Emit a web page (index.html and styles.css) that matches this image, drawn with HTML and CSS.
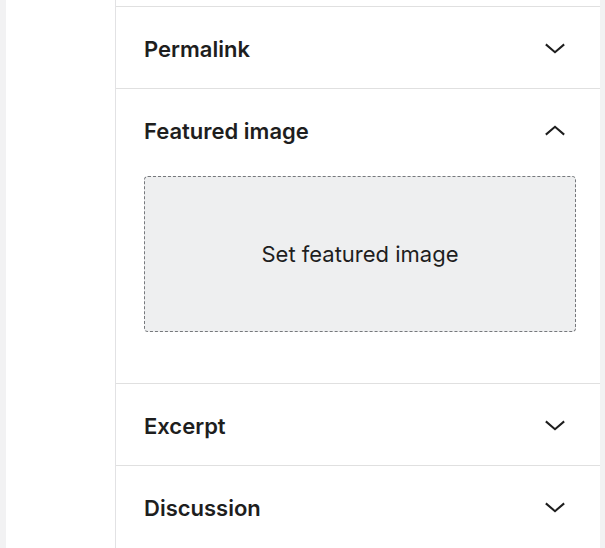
FILE: index.html
```html
<!DOCTYPE html>
<html>
<head>
<meta charset="utf-8">
<link rel="stylesheet" href="styles.css">
</head>
<body>
<div class="layout">
  <div class="edge-left"></div>
  <div class="canvas"></div>
  <div class="sidebar">
    <div class="prev-end"></div>
    <section class="panel">
      <div class="panel-header">
        <span class="panel-title">Permalink</span>
        <svg class="chev" viewBox="0 0 24 12" width="22" height="11"><path d="M2 1.5 L12 10 L22 1.5" fill="none" stroke="#1e1e1e" stroke-width="2.2"/></svg>
      </div>
    </section>
    <section class="panel open">
      <div class="panel-header">
        <span class="panel-title">Featured image</span>
        <svg class="chev" viewBox="0 0 24 12" width="22" height="11"><path d="M2 10.5 L12 2 L22 10.5" fill="none" stroke="#1e1e1e" stroke-width="2.2"/></svg>
      </div>
      <div class="panel-body">
        <div class="dropzone">Set featured image</div>
      </div>
    </section>
    <section class="panel">
      <div class="panel-header">
        <span class="panel-title">Excerpt</span>
        <svg class="chev" viewBox="0 0 24 12" width="22" height="11"><path d="M2 1.5 L12 10 L22 1.5" fill="none" stroke="#1e1e1e" stroke-width="2.2"/></svg>
      </div>
    </section>
    <section class="panel">
      <div class="panel-header">
        <span class="panel-title">Discussion</span>
        <svg class="chev" viewBox="0 0 24 12" width="22" height="11"><path d="M2 1.5 L12 10 L22 1.5" fill="none" stroke="#1e1e1e" stroke-width="2.2"/></svg>
      </div>
    </section>
  </div>
  <div class="edge-right"></div>
</div>
</body>
</html>
```

FILE: styles.css
```css
html, body {
  margin: 0;
  padding: 0;
  background: #ffffff;
}
body {
  font-family: Inter, "Liberation Sans", Arial, sans-serif;
  color: #1e1e1e;
}
.layout {
  display: flex;
  height: 548px;
  overflow: hidden;
}
.edge-left {
  width: 6px;
  background: #f2f2f3;
  flex: none;
}
.canvas {
  width: 109px;
  flex: none;
  background: #ffffff;
  border-right: 1px solid #e2e2e4;
}
.sidebar {
  width: 484px;
  flex: none;
  background: #ffffff;
}
.edge-right {
  flex: 1;
  background: #f2f2f3;
}
.prev-end {
  height: 6px;
}
.panel {
  border-top: 1px solid #e0e0e0;
}
.panel-header {
  height: 81px;
  display: flex;
  align-items: center;
  justify-content: space-between;
  padding: 2px 34px 0 28px;
  box-sizing: border-box;
}
.panel-title {
  font-size: 22px;
  font-weight: 600;
  letter-spacing: 0;
}
.chev {
  display: block;
}
.panel-body {
  padding: 6px 24px 51px 28px;
}
.dropzone {
  height: 154px;
  background: #eeeff0;
  border: 1px dashed #76787c;
  border-radius: 4px;
  display: flex;
  align-items: center;
  justify-content: center;
  font-size: 22px;
  font-weight: 400;
  color: #1e1e1e;
}
```
